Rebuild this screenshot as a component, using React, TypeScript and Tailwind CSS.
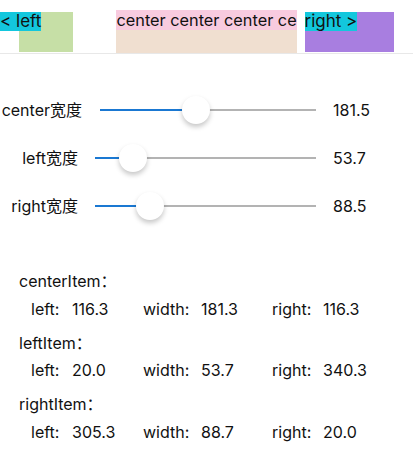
import React from "react";

const font = { fontFamily: 'Inter, "Noto Sans CJK SC", sans-serif' };

function SliderRow({
  label,
  labelW,
  gap,
  frac,
  value,
}: {
  label: string;
  labelW: string;
  gap: string;
  frac: number;
  value: string;
}) {
  return (
    <div className="flex h-[48px] items-center">
      <div className={`${labelW} shrink-0 whitespace-nowrap text-right text-[16px] text-[#111]`}>{label}</div>
      <div className={`${gap} relative h-[2px] flex-1 bg-[#b3b3b3]`}>
        <div className="absolute left-0 top-0 h-[2px] bg-[#1a78d2]" style={{ width: `${frac * 100}%` }} />
        <div
          className="absolute top-[-13px] h-[28px] w-[28px] -translate-x-1/2 rounded-full bg-white shadow-[0_3px_5px_rgba(0,0,0,0.22)]"
          style={{ left: `${frac * 100}%` }}
        />
      </div>
      <div className="w-[97px] shrink-0 pl-[17px] text-[16px] text-[#111]">{value}</div>
    </div>
  );
}

function ItemBlock({ title, vals }: { title: string; vals: [string, string, string] }) {
  return (
    <div className="flex flex-col">
      <div className="h-[22px] leading-[22px] text-[16px] text-[#111]">{title}：</div>
      <div className="mt-[5.5px] flex h-[22px] pl-[12px] text-[16px] leading-[22px] text-[#111]">
        <div className="flex w-[112px]">
          <span className="w-[41px]">left:</span>
          <span>{vals[0]}</span>
        </div>
        <div className="flex w-[129px]">
          <span className="w-[58px]">width:</span>
          <span>{vals[1]}</span>
        </div>
        <div className="flex">
          <span className="w-[51px]">right:</span>
          <span>{vals[2]}</span>
        </div>
      </div>
    </div>
  );
}

export default function App() {
  return (
    <div className="relative h-[455px] w-[413px] overflow-hidden bg-white" style={font}>
      <div className="flex h-[54px] border-b border-[#e8e8e8]">
        <div className="ml-[19px] mt-[12px] h-[40px] w-[54px] bg-[#c6dfa6]">
          <div className="-ml-[19px] w-fit bg-[#13c7dd] text-[17px] leading-[19px] text-[#111] whitespace-nowrap">
            &lt; left
          </div>
        </div>
        <div className="ml-[42.5px] mt-[10px] flex h-[43px] w-[181.5px] flex-col overflow-hidden bg-[#f0dfd0]">
          <div className="h-[20px] overflow-hidden whitespace-nowrap bg-[#f8cbdf] pl-[1px] text-[16.3px] leading-[20px] text-[#111]">
            center center center ce
          </div>
        </div>
        <div className="ml-[7.5px] mt-[12px] h-[40px] w-[89px] bg-[#a87ee0]">
          <div className="w-fit bg-[#13c7dd] text-[17px] leading-[19px] text-[#111] whitespace-nowrap">
            right &gt;
          </div>
        </div>
      </div>

      <div className="flex flex-col pt-[32px]">
        <SliderRow label="center宽度" labelW="w-[82px]" gap="ml-[18px]" frac={0.444} value="181.5" />
        <SliderRow label="left宽度" labelW="w-[78px]" gap="ml-[17px]" frac={0.172} value="53.7" />
        <SliderRow label="right宽度" labelW="w-[78px]" gap="ml-[17px]" frac={0.249} value="88.5" />
      </div>

      <div className="flex flex-col gap-[12px] pl-[19px] pt-[40px]">
        <ItemBlock title="centerItem" vals={["116.3", "181.3", "116.3"]} />
        <ItemBlock title="leftItem" vals={["20.0", "53.7", "340.3"]} />
        <ItemBlock title="rightItem" vals={["305.3", "88.7", "20.0"]} />
      </div>
    </div>
  );
}
